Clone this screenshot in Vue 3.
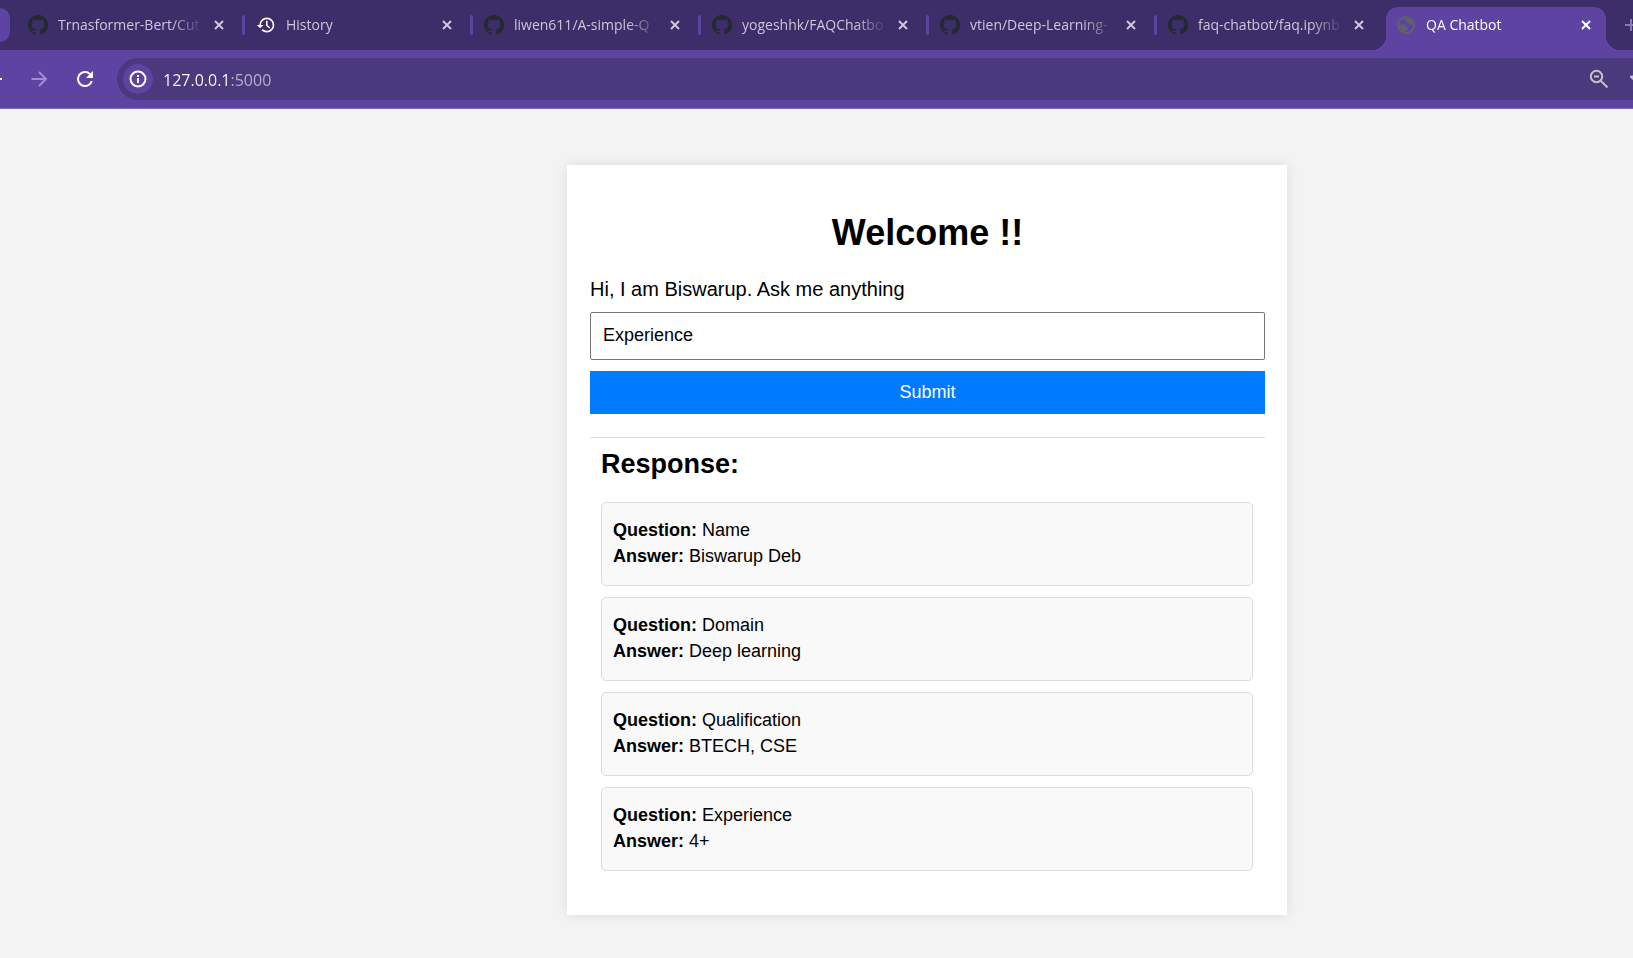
<script setup>
import { ref } from 'vue'

const tabs = [
  { title: 'Trnasformer-Bert/Cut', icon: 'github' },
  { title: 'History', icon: 'history' },
  { title: 'liwen611/A-simple-Q', icon: 'github' },
  { title: 'yogeshhk/FAQChatbo', icon: 'github' },
  { title: 'vtien/Deep-Learning-', icon: 'github' },
  { title: 'faq-chatbot/faq.ipynb', icon: 'github' },
  { title: 'QA Chatbot', icon: 'globe', active: true },
]

const address = ref('127.0.0.1:5000')
const question = ref('Experience')

const responses = ref([
  { question: 'Name', answer: 'Biswarup Deb' },
  { question: 'Domain', answer: 'Deep learning' },
  { question: 'Qualification', answer: 'BTECH, CSE' },
  { question: 'Experience', answer: '4+' },
])
</script>

<template>
  <div class="browser">
    <header class="chrome">
      <div class="strip">
        <button class="tab-search" type="button" aria-label="Search tabs"></button>
        <div v-for="tab in tabs" :key="tab.title" class="tab" :class="{ active: tab.active }">
          <svg v-if="tab.icon === 'github'" class="favicon github" viewBox="0 0 16 16" aria-hidden="true">
            <path d="M8 0C3.58 0 0 3.58 0 8c0 3.54 2.29 6.53 5.47 7.59.4.07.55-.17.55-.38 0-.19-.01-.82-.01-1.49-2.01.37-2.53-.49-2.69-.94-.09-.23-.48-.94-.82-1.13-.28-.15-.68-.52-.01-.53.63-.01 1.08.58 1.23.82.72 1.21 1.87.87 2.33.66.07-.52.28-.87.51-1.07-1.78-.2-3.64-.89-3.64-3.95 0-.87.31-1.59.82-2.15-.08-.2-.36-1.02.08-2.12 0 0 .67-.21 2.2.82.64-.18 1.32-.27 2-.27.68 0 1.36.09 2 .27 1.53-1.04 2.2-.82 2.2-.82.44 1.1.16 1.92.08 2.12.51.56.82 1.27.82 2.15 0 3.07-1.87 3.75-3.65 3.95.29.25.54.73.54 1.48 0 1.07-.01 1.93-.01 2.2 0 .21.15.46.55.38A8.013 8.013 0 0 0 16 8c0-4.42-3.58-8-8-8z" />
          </svg>
          <svg v-else-if="tab.icon === 'history'" class="favicon history" viewBox="0 0 24 24" aria-hidden="true">
            <path d="M13 3a9 9 0 0 0-9 9H1l4 4 4-4H6c0-3.87 3.13-7 7-7s7 3.13 7 7-3.13 7-7 7c-1.93 0-3.68-.79-4.94-2.06l-1.42 1.42A8.954 8.954 0 0 0 13 21a9 9 0 0 0 0-18zm-1 4v6l4.1 3.1 1.1-1.5-3.3-2.4V7H12z" />
          </svg>
          <svg v-else class="favicon globe" viewBox="0 0 20 20" aria-hidden="true">
            <circle cx="10" cy="10" r="8" fill="none" stroke="currentColor" stroke-width="2" />
            <path fill="currentColor" d="M11 2c-.5 1.300-2.500 1.200-2.500 2.700 0 1 .9 1.600 1.900 1.500.2 1.500 1 2.300 2.500 2.300.9 0 1.300.8 2.300 1h2.700C18 5.500 15 2 11 2zM2 9.500h5c2 0 3.200 1 3.200 2.600 1.500 0 1.800.7 1.800 1.900 0 1.300-1.500 1.400-2.500 1.400V18C5 18 1.800 14.500 2 9.500z" />
          </svg>
          <button class="tab-title" type="button">{{ tab.title }}</button>
          <button class="tab-close" type="button" :aria-label="'Close ' + tab.title">
            <svg viewBox="0 0 10 10" aria-hidden="true"><path d="M1 1l8 8M9 1L1 9" /></svg>
          </button>
        </div>
        <button class="new-tab" type="button" aria-label="New tab">
          <svg viewBox="0 0 14 14" aria-hidden="true"><path d="M7 1v12M1 7h12" /></svg>
        </button>
      </div>

      <nav class="toolbar" aria-label="Browser toolbar">
        <button class="back" type="button" aria-label="Back"></button>
        <button class="tool forward" type="button" aria-label="Forward">
          <svg viewBox="0 0 24 24" aria-hidden="true"><path d="M4.500 12h14M12 5l7 7-7 7" /></svg>
        </button>
        <button class="tool reload" type="button" aria-label="Reload">
          <svg viewBox="0 0 24 24" aria-hidden="true">
            <path d="M17.650 6.350A7.958 7.958 0 0 0 12 4a8 8 0 1 0 7.730 10h-2.080A5.990 5.990 0 0 1 12 18a6 6 0 1 1 0-12c1.660 0 3.140.690 4.220 1.780L13 11h7V4l-2.350 2.350z" />
          </svg>
        </button>
        <div class="omnibox">
          <button class="site-info" type="button" aria-label="Site information">
            <svg viewBox="0 0 20 20" aria-hidden="true">
              <circle cx="10" cy="10" r="7.500" />
              <path d="M10 9v5M10 6v2" />
            </svg>
          </button>
          <input v-model="address" class="address" type="text" aria-label="Address" spellcheck="false" />
          <button class="tool zoom-out" type="button" aria-label="Zoom">
            <svg viewBox="0 0 24 24" aria-hidden="true">
              <circle cx="9.500" cy="9.500" r="5.700" />
              <path d="M7 9.500h5M13.700 13.700l6.800 6.800" />
            </svg>
          </button>
          <button class="bookmark" type="button" aria-label="Bookmark">
            <svg viewBox="0 0 20 20" aria-hidden="true">
              <path d="M10 1l2.600 6.200 6.700.6-5.100 4.400 1.600 6.600L10 15.300l-5.800 3.500 1.600-6.600L.7 7.800l6.700-.6z" />
            </svg>
          </button>
        </div>
      </nav>
    </header>

    <main class="page">
      <section class="card">
        <h1>Welcome !!</h1>
        <form @submit.prevent>
          <label for="question">Hi, I am Biswarup. Ask me anything</label>
          <input id="question" v-model="question" class="question" type="text" />
          <button class="submit" type="submit">Submit</button>
        </form>
        <section class="response">
          <h2>Response:</h2>
          <ul>
            <li v-for="item in responses" :key="item.question">
              <div><strong>Question:</strong> {{ item.question }}</div>
              <div><strong>Answer:</strong> {{ item.answer }}</div>
            </li>
          </ul>
        </section>
      </section>
    </main>
  </div>
</template>

<style>
body {
  margin: 0;
  background: #f3f3f3;
}
</style>

<style scoped>
* {
  box-sizing: border-box;
}

.browser {
  min-height: 100vh;
  overflow: hidden;
  background: #f3f3f3;
  color: #000;
  font-family: "Liberation Sans", Arial, sans-serif;
}

button {
  padding: 0;
  border: 0;
  background: none;
  color: inherit;
  font: inherit;
}

svg {
  display: block;
}

.chrome {
  background: #5e43a3;
  border-bottom: 1px solid #7f69b6;
  font-family: "Segoe UI", "Open Sans", sans-serif;
}

.strip {
  display: flex;
  align-items: flex-end;
  height: 50px;
  overflow: hidden;
  background: #3d2d68;
}

.tab-search {
  flex: none;
  align-self: center;
  width: 10px;
  height: 34px;
  margin-right: 7px;
  border-radius: 0 10px 10px 0;
  background: #5e43a3;
}

.tab {
  position: relative;
  display: flex;
  flex: none;
  align-items: center;
  width: 228px;
  height: 43px;
  padding: 0 21px 7px 11px;
  color: #cdc6dc;
}

.tab:not(.active)::after {
  content: "";
  position: absolute;
  top: 8px;
  right: 0;
  width: 3px;
  height: 20px;
  border-radius: 2px;
  background: #5e43a3;
}

.tab:nth-last-child(3)::after {
  display: none;
}

.tab.active {
  width: 220px;
  margin-left: 1px;
  padding: 0 15px 7px 10px;
  border-radius: 12px 12px 0 0;
  background: #5e43a3;
  color: #fff;
}

.tab.active::before,
.tab.active::after {
  content: "";
  position: absolute;
  top: auto;
  bottom: 0;
  width: 14px;
  height: 14px;
}

.tab.active::before {
  right: 100%;
  background: radial-gradient(circle at 0 0, transparent 14px, #5e43a3 14px);
}

.tab.active::after {
  left: 100%;
  background: radial-gradient(circle at 100% 0, transparent 14px, #5e43a3 14px);
}

.favicon {
  flex: none;
  width: 20px;
  height: 20px;
}

.github {
  fill: #24292f;
}

.history {
  fill: #fff;
}

.globe {
  color: #5f6368;
}

.tab-title {
  flex: 1;
  min-width: 0;
  margin: 0 11px 0 10px;
  overflow: hidden;
  font-size: 14px;
  line-height: 20px;
  text-align: left;
  white-space: nowrap;
  mask-image: linear-gradient(to right, #000 calc(100% - 32px), transparent);
}

.tab-close svg {
  width: 10px;
  height: 10px;
  fill: none;
  stroke: currentColor;
  stroke-width: 2;
}

.new-tab {
  flex: none;
  align-self: center;
  margin-left: 18px;
  color: #8c7ab5;
}

.new-tab svg {
  width: 14px;
  height: 14px;
  fill: none;
  stroke: currentColor;
  stroke-width: 2;
}

.toolbar {
  display: flex;
  align-items: center;
  height: 58px;
  color: #fff;
}

.back {
  width: 2px;
  height: 2px;
  margin-right: 25px;
  background: #fff;
}

.tool svg {
  width: 24px;
  height: 24px;
}

.forward {
  margin-right: 22px;
  color: #a08fcb;
}

.forward svg {
  fill: none;
  stroke: currentColor;
  stroke-width: 2;
}

.reload {
  margin-right: 20px;
}

.reload svg {
  fill: currentColor;
}

.omnibox {
  display: flex;
  flex: 1;
  align-items: center;
  min-width: 0;
  height: 42px;
  padding-left: 6px;
  overflow: hidden;
  border-radius: 21px 0 0 21px;
  background: #4b397d;
}

.site-info {
  display: grid;
  flex: none;
  place-items: center;
  width: 30px;
  height: 30px;
  border-radius: 50%;
  background: #5e43a3;
}

.site-info svg {
  width: 20px;
  height: 20px;
  fill: none;
  stroke: #fff;
  stroke-width: 2;
}

.address {
  flex: 1;
  min-width: 0;
  height: 26px;
  margin-left: 10px;
  padding: 2px 0 0;
  border: 0;
  outline: 0;
  background: linear-gradient(to right, #fff 67px, #bcb2d0 67px);
  background-clip: text;
  color: transparent;
  font-family: inherit;
  font-size: 16px;
}

.zoom-out {
  flex: none;
  margin-right: 19px;
  color: #c6c2bd;
}

.zoom-out svg {
  fill: none;
  stroke: currentColor;
  stroke-width: 2;
}

.bookmark {
  flex: none;
  width: 3px;
  color: #c6c2bd;
}

.bookmark svg {
  width: 20px;
  height: 20px;
  fill: none;
  stroke: currentColor;
  stroke-width: 2;
}

.page {
  display: flex;
  justify-content: center;
  padding: 56px 0 43px 221px;
}

.card {
  width: 100%;
  max-width: 720px;
  padding: 47px 22px 44px 23px;
  background: #fff;
  box-shadow: 0 0 11px rgba(0, 0, 0, 0.1);
}

h1 {
  margin: 0 0 23px;
  font-size: 36px;
  line-height: 42px;
  text-align: center;
}

form {
  display: flex;
  flex-direction: column;
  gap: 11px;
  margin-bottom: 23px;
}

label {
  font-size: 20px;
  line-height: 24px;
}

.question {
  height: 48px;
  padding: 11px 12px 13px;
  border: 1px solid #767676;
  border-radius: 2px;
  background: #fff;
  color: #000;
  font-family: inherit;
  font-size: 18px;
}

.submit {
  height: 43px;
  background: #007bff;
  color: #fff;
  font-size: 18px;
}

.response {
  padding: 10px 12px 0 11px;
  border-top: 1px solid #ddd;
}

h2 {
  margin: 0 0 22px;
  font-size: 27px;
  line-height: 32px;
}

ul {
  display: flex;
  flex-direction: column;
  gap: 11px;
  margin: 0;
  padding: 0;
  list-style: none;
}

li {
  padding: 14px 11px 16px;
  border: 1px solid #ddd;
  border-radius: 5px;
  background: #f9f9f9;
  font-size: 18px;
  line-height: 26px;
}
</style>
